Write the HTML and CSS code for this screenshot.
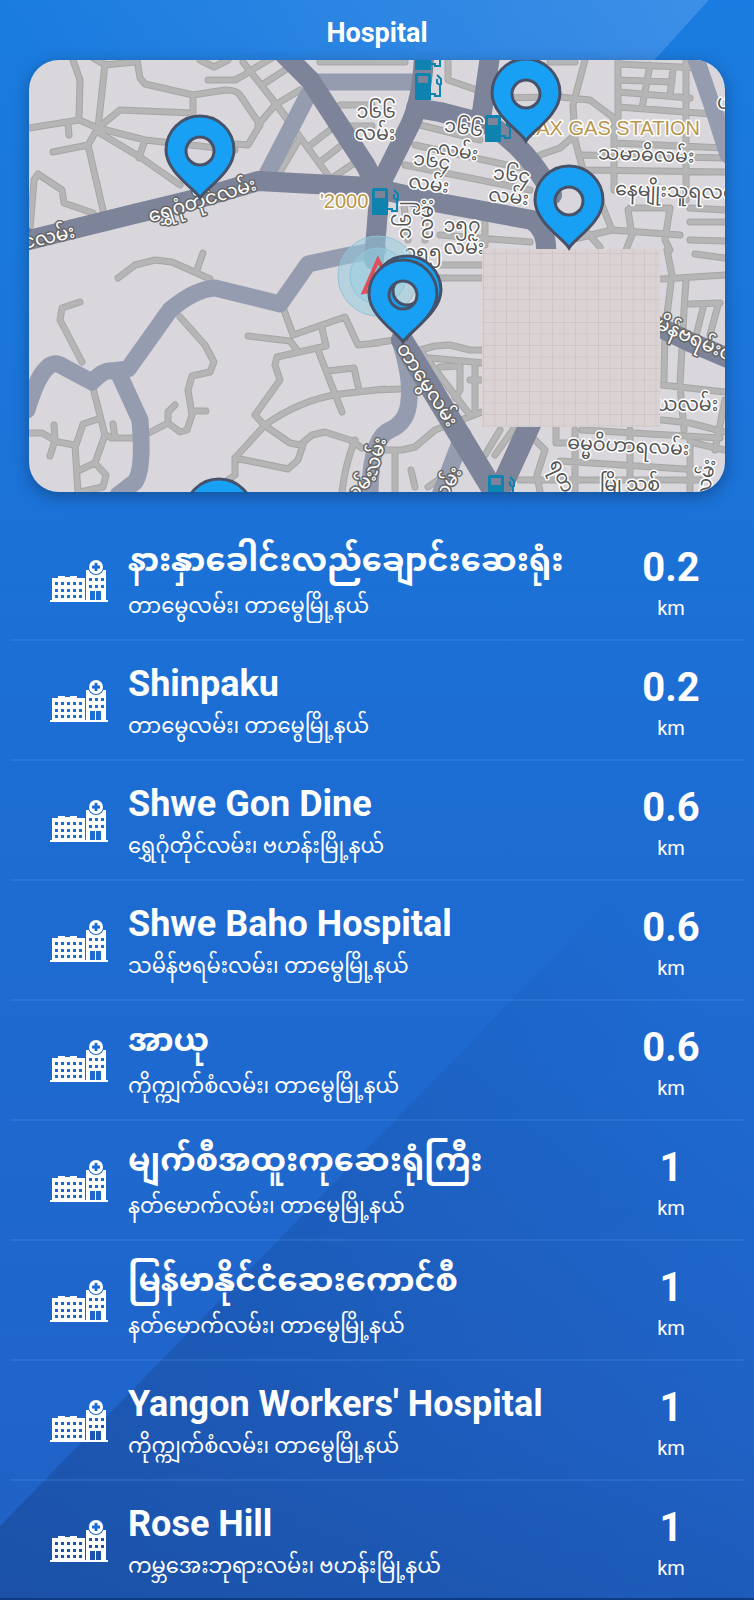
FILE: index.html
```html
<!DOCTYPE html>
<html lang="my">
<head>
  <meta charset="UTF-8"/>
  <meta name="viewport" content="width=device-width, initial-scale=1.0"/>
  <title>Hospital</title>
  <link rel="stylesheet" href="styles.css">
</head>
<body>

  <!-- Shared icons -->
  <svg class="defs" width="0" height="0" aria-hidden="true">
    <symbol id="hospital" viewBox="0 0 60 44">
      <path fill="currentColor" fill-rule="evenodd" d="M3 18h6v-2h7v1h5v-1h7v2h8v22H3zM6 22v3h3v-3zM12 22v3h3v-3zM18 22v3h3v-3zM24 22v3h3v-3zM30 22v3h3v-3zM6 29v3h3v-3zM12 29v3h3v-3zM18 29v3h3v-3zM24 29v3h3v-3zM30 29v3h3v-3zM6 35v3h3v-3zM12 35v3h3v-3zM18 35v3h3v-3zM24 35v3h3v-3zM30 35v3h3v-3z"/>
      <path fill="currentColor" fill-rule="evenodd" d="M37 10h20v30H37zM40 18v3h3v-3zM46 18v3h3v-3zM52 18v3h3v-3zM40 25v3h3v-3zM46 25v3h3v-3zM52 25v3h3v-3zM41 31v9h5v-9zM47 31v9h5v-9z"/>
      <path fill="currentColor" d="M1 40h58v2H1z"/>
      <circle class="icon-gap" cx="47" cy="7" r="8"/>
      <circle fill="currentColor" cx="47" cy="7" r="7"/>
      <path class="icon-plus" d="M47 3v8M43 7h8"/>
    </symbol>
    <symbol id="pin" viewBox="-37 -84 74 86" overflow="visible">
      <path fill-rule="evenodd" d="M0 0C-5 -9 -34 -26 -34 -48A34 34 0 0 1 34 -48C34 -26 5 -9 0 0ZM0 -61A14 14 0 1 0 0 -33A14 14 0 1 0 0 -61Z"/>
    </symbol>
    <symbol id="pump" viewBox="0 0 28 28">
      <path fill-rule="evenodd" d="M1 3Q1 1 3 1H15Q17 1 17 3V28H1ZM4 4V11H14V4Z"/>
      <path class="hose" d="M17 22h4v2h5V13l-3-2V7m0-4l4 4v6"/>
    </symbol>
  </svg>

  <div class="page">
    <header>
      <h1>Hospital</h1>
    </header>

    <main>
      <!-- Map -->
      <div class="map">
        <svg viewBox="29 60 696 432" preserveAspectRatio="xMidYMid slice" role="img" aria-label="Map">
          <defs>
            <path id="streets" d="M73 60L80 80L79 120M29 128L79 120L98 128L145 140L235 150M105 64L98 128L88 145L103 210M68 123L69 135M53 152L88 145M98 132L140 157L180 185M145 140L139 158M98 128L120 110L193 113V95M137 60L140 78L145 84L193 95L225 90Q237 90 240 95L260 125L248 145L235 144M90 56L105 65L135 62M200 60L214 67L228 60M208 80H235Q245 75 255 68L275 56M243 62L287 118M300 90L275 105L258 125M262 85L285 70M275 103L330 178M300 138L277 177M308 147L330 130M320 162L342 145M335 176L356 162
            M29 240L34 180L38 174L62 190L64 203L93 213M340 105H372M350 126H372M320 62H405
            M118 278L135 265L155 260L172 262L190 270L210 279M203 253L197 270M80 302L62 308L60 320L82 362M180 317L205 345L214 362L210 372L192 376L188 390L192 415L187 430L180 432L168 423L145 435M168 423V412L175 405M192 411H206M93 388L105 435L95 463L80 470M105 435L112 438H135M113 424L115 438M29 433L42 433L58 442L75 445L78 492M54 425L55 440L50 456M98 419L83 424L76 445M95 463L106 475L103 487L80 492
            M248 336L290 341L297 350M284 310L293 335L345 317L358 345L378 343M322 328L326 346L277 357L275 365L280 380L255 415L264 425M318 350L342 412M328 371L354 368L359 390M385 389L340 394Q300 400 265 425L235 458L235 475L225 482M264 425L290 443L300 445L312 435L325 432L350 440L362 448M303 445L298 460L288 469L235 458M355 440Q345 465 342 492
            M374 343L395 340M374 390L400 389M395 450V492M374 450L402 450L415 447L435 430L482 412M420 350L435 346L450 345L470 350H484M420 350L470 415M430 358L484 363M440 367L460 366V390L455 398M470 380H484M475 365V412M411 470L415 487M440 265H484M440 278H484M500 430L485 455M515 427L495 455M428 487L445 475
            M520 425L545 450L537 475L540 492M556 428V443H580M582 430L720 438M575 430V492M560 461L700 470M630 430V492M690 440V492M690 442L725 450M520 480H700
            M667 250L672 275L665 330L664 380M662 279L725 275M686 280L684 310L680 385L684 430M690 304L720 303M703 308L695 340M718 305L710 335M662 385L725 392M662 420L690 423L725 432M695 254L725 258M725 400L715 450
            M448 60V80L500 98L560 97L590 100L614 118V190M585 60L573 105L575 140L583 170L725 172M618 60V130M650 65L642 108M673 70L670 95M618 64L700 68M618 80L672 82M618 92L690 98M618 107L725 115M686 60V200M550 62H575M540 155L560 148L575 135M583 155L725 158M614 143L725 148M420 125L480 140M415 145L530 170M405 165L530 190
            M600 200L612 230L680 235M628 210L632 235L626 250M630 208H670L665 240L670 250M570 240L612 230M690 208L725 210M690 222H725M690 240L725 241M600 247L585 230M440 235L530 242M404 205L408 240M425 210V240M485 220V245"/>
            <pattern id="grid" width="23" height="23" patternUnits="userSpaceOnUse">
              <rect width="23" height="23" fill="#dbd2d4"/>
              <path d="M0 12H23M12 0V23" stroke="#d2c8cb"/>
              <path d="M0 0H23M0 0V23" stroke="#c5babd"/>
            </pattern>
          </defs>

          <rect class="land" x="29" y="60" width="696" height="432"/>
          <use href="#streets" class="street-edge"/>
          <use href="#streets" class="street"/>

          <!-- Secondary roads -->
          <g class="road light">
            <path d="M310 82H415"/>
            <path d="M308 95L265 178"/>
            <path d="M695 56L712 105L728 155"/>
            <path d="M27 410Q36 380 45 370Q53 360 62 366L92 382Q104 369 112 371L128 369L170 310Q195 289 215 288L280 304L308 264L345 256L378 250"/>
            <path d="M118 372L140 420Q144 470 135 482L118 495"/>
            <path d="M400 340Q412 380 409 400Q408 422 390 430Q370 438 370 495"/>
            <path d="M463 435L440 495"/>
          </g>
          <!-- Main roads -->
          <g class="road">
            <path d="M490 56L482 112"/>
            <path d="M25 241L130 215L200 198L258 181L370 187L440 203L532 220Q548 230 546 255"/>
            <path d="M284 54L310 80L366 166L378 190"/>
            <path d="M424 56Q422 100 410 125L380 185L374 260"/>
            <path d="M416 108L440 112L490 125Q530 150 552 195"/>
            <path class="wide" d="M402 340L490 485"/>
            <path class="wide" d="M532 420L500 490"/>
            <path d="M655 325L690 342L728 358"/>
          </g>

          <!-- Street names -->
          <g class="name">
            <text x="376" y="118">၁၆၆</text>
            <text x="375" y="140">လမ်း</text>
            <text transform="translate(463 134) rotate(8)">၁၆၆</text>
            <text transform="translate(457 157) rotate(10)">လမ်း</text>
            <text transform="translate(431 167) rotate(8)">၁၆၄</text>
            <text transform="translate(428 190) rotate(8)">လမ်း</text>
            <text transform="translate(511 181) rotate(6)">၁၆၄</text>
            <text transform="translate(508 203) rotate(6)">လမ်း</text>
            <text x="462" y="232">၁၅၇</text>
            <text x="464" y="254">လမ်း</text>
            <text x="423" y="259">၁၅၅</text>
            <text transform="translate(411 220) rotate(-90)">၁၆၂</text>
            <text transform="translate(433 219) rotate(-90)">လမ်း</text>
            <text transform="translate(646 161) rotate(2)">သမာဓိလမ်း</text>
            <text class="start" transform="translate(615 195) rotate(2)">နေမျိုးသူရလမ်း</text>
            <text class="start" x="717" y="109">ပ</text>
            <text class="start" x="656" y="411">ယလမ်း</text>
            <text transform="translate(628 452) rotate(3)">ဓမ္မဝိဟာရလမ်း</text>
            <text x="630" y="491">မြို့သစ်</text>
            <text class="start" transform="translate(549 463) rotate(65)">ရတနာ</text>
            <text transform="translate(712 480) rotate(-80)">လမ်း</text>
          </g>
          <g class="name on-road">
            <text transform="translate(204 206) rotate(-17)">ရွှေဂုံတိုင်လမ်း</text>
            <text transform="translate(50 243) rotate(-13)">င်လမ်း</text>
            <text transform="translate(422 388) rotate(57)">တာမွေလမ်း</text>
            <text class="start" transform="translate(655 328) rotate(24)">မိန်ဗရမ်းလမ်း</text>
            <text transform="translate(381 459) rotate(-75)">လမ်း</text>
            <text transform="translate(363 492) rotate(-45)">လမ်း</text>
            <text transform="translate(452 489) rotate(-60)">လမ်း</text>
          </g>

          <rect x="482" y="249" width="178" height="178" fill="url(#grid)"/>

          <!-- Gas stations -->
          <g class="place">
            <text x="320" y="208">'2000</text>
            <text x="700" y="135" text-anchor="end">MAX GAS STATION</text>
          </g>
          <g class="pump">
            <use href="#pump" x="414" y="42" width="28" height="28"/>
            <use href="#pump" x="414" y="72" width="28" height="28"/>
            <use href="#pump" x="484" y="114" width="28" height="28"/>
            <use href="#pump" x="371" y="187" width="28" height="28"/>
            <use href="#pump" x="487" y="474" width="28" height="28"/>
          </g>

          <!-- Current location -->
          <g class="location">
            <circle cx="378" cy="276" r="40"/>
            <circle cx="378" cy="276" r="28"/>
            <path d="M378 260L364 292L392 286Z"/>
          </g>

          <!-- Hospital pins -->
          <g class="pin">
            <use href="#pin" x="163" y="114" width="74" height="86"/>
            <use href="#pin" x="489" y="57" width="74" height="86"/>
            <use href="#pin" x="532" y="164" width="74" height="86"/>
            <use href="#pin" x="370" y="254" width="74" height="86"/>
            <use href="#pin" x="366" y="258" width="74" height="86"/>
            <use href="#pin" x="182" y="477" width="74" height="86"/>
          </g>
        </svg>
      </div>

      <!-- Hospital list -->
      <ul class="list">
        <li>
          <svg class="icon" aria-hidden="true"><use href="#hospital"/></svg>
          <div class="info">
            <h2 class="mm">နားနှာခေါင်းလည်ချောင်းဆေးရုံး</h2>
            <p>တာမွေလမ်း၊ တာမွေမြို့နယ်</p>
          </div>
          <div class="distance"><strong>0.2</strong><span>km</span></div>
        </li>
        <li>
          <svg class="icon" aria-hidden="true"><use href="#hospital"/></svg>
          <div class="info">
            <h2>Shinpaku</h2>
            <p>တာမွေလမ်း၊ တာမွေမြို့နယ်</p>
          </div>
          <div class="distance"><strong>0.2</strong><span>km</span></div>
        </li>
        <li>
          <svg class="icon" aria-hidden="true"><use href="#hospital"/></svg>
          <div class="info">
            <h2>Shwe Gon Dine</h2>
            <p>ရွှေဂုံတိုင်လမ်း၊ ဗဟန်းမြို့နယ်</p>
          </div>
          <div class="distance"><strong>0.6</strong><span>km</span></div>
        </li>
        <li>
          <svg class="icon" aria-hidden="true"><use href="#hospital"/></svg>
          <div class="info">
            <h2>Shwe Baho Hospital</h2>
            <p>သမိန်ဗရမ်းလမ်း၊ တာမွေမြို့နယ်</p>
          </div>
          <div class="distance"><strong>0.6</strong><span>km</span></div>
        </li>
        <li>
          <svg class="icon" aria-hidden="true"><use href="#hospital"/></svg>
          <div class="info">
            <h2 class="mm">အာယု</h2>
            <p>ကိုက္ကျက်စံလမ်း၊ တာမွေမြို့နယ်</p>
          </div>
          <div class="distance"><strong>0.6</strong><span>km</span></div>
        </li>
        <li>
          <svg class="icon" aria-hidden="true"><use href="#hospital"/></svg>
          <div class="info">
            <h2 class="mm">မျက်စီအထူးကုဆေးရုံကြီး</h2>
            <p>နတ်မောက်လမ်း၊ တာမွေမြို့နယ်</p>
          </div>
          <div class="distance"><strong>1</strong><span>km</span></div>
        </li>
        <li>
          <svg class="icon" aria-hidden="true"><use href="#hospital"/></svg>
          <div class="info">
            <h2 class="mm">မြန်မာနိုင်ငံဆေးကောင်စီ</h2>
            <p>နတ်မောက်လမ်း၊ တာမွေမြို့နယ်</p>
          </div>
          <div class="distance"><strong>1</strong><span>km</span></div>
        </li>
        <li>
          <svg class="icon" aria-hidden="true"><use href="#hospital"/></svg>
          <div class="info">
            <h2>Yangon Workers' Hospital</h2>
            <p>ကိုက္ကျက်စံလမ်း၊ တာမွေမြို့နယ်</p>
          </div>
          <div class="distance"><strong>1</strong><span>km</span></div>
        </li>
        <li>
          <svg class="icon" aria-hidden="true"><use href="#hospital"/></svg>
          <div class="info">
            <h2>Rose Hill</h2>
            <p>ကမ္ဘအေးဘုရားလမ်း၊ ဗဟန်းမြို့နယ်</p>
          </div>
          <div class="distance"><strong>1</strong><span>km</span></div>
        </li>
      </ul>
    </main>
  </div>

</body>
</html>
```
FILE: styles.css
```css
* {
  box-sizing: border-box;
}

body {
  margin: 0;
  font-family: Roboto, "Noto Sans Myanmar", "Noto Sans", sans-serif;
  color: white;
}

h1, h2, p, ul {
  margin: 0;
  padding: 0;
}

.defs {
  position: absolute;
}

.page {
  position: relative;
  isolation: isolate;
  min-height: 100vh;
  background: linear-gradient(to bottom, #1a7ce0, #1c6ed4 45%, #2064ca 90%, #1f5fc0);
  border-bottom: 2px solid #0d3b86;
}

/* Diagonal shapes behind the content */
.page::before,
.page::after {
  content: "";
  position: absolute;
  inset: 0;
  z-index: -1;
}

.page::before {
  background: linear-gradient(to bottom left, rgba(120,175,240,0.4), rgba(120,175,240,0) 50%);
  clip-path: polygon(0 0, 94% 0, 0 49%);
}

.page::after {
  background: linear-gradient(to top right, rgba(20,55,120,0.35), rgba(20,60,130,0.25) 28%, rgba(20,60,130,0) 65%);
  clip-path: polygon(0 95.5%, 100% 47%, 100% 100%, 0 100%);
}

header {
  height: 60px;
  padding-top: 14px;
  text-align: center;
}

h1 {
  font-size: 27px;
  line-height: 38px;
}

/* Map */
.map {
  margin: 0 29px;
  border-radius: 30px;
  overflow: hidden;
  box-shadow: 0 4px 16px rgba(0,0,0,0.3);
}

.map svg {
  display: block;
  width: 100%;
}

.land {
  fill: #d9d6dc;
}

.street-edge,
.street,
.road {
  fill: none;
  stroke-linejoin: round;
  stroke-linecap: round;
}

.street-edge {
  stroke: #a6a6a6;
  stroke-width: 7px;
}

.street {
  stroke: #b5b5b5;
  stroke-width: 5px;
}

.road {
  stroke: #7d8398;
  stroke-width: 20px;
}

.road.light {
  stroke: #969cb0;
  stroke-width: 17px;
}

.road .wide {
  stroke-width: 22px;
}

.pump {
  fill: #0f83b0;
}

.hose {
  fill: none;
  stroke: #0f83b0;
  stroke-width: 2px;
}

.place text,
.name text {
  paint-order: stroke;
  stroke: white;
  stroke-width: 3px;
  stroke-linejoin: round;
}

.place {
  font-family: "Liberation Sans", sans-serif;
  font-size: 20px;
  fill: #b8964a;
}

.name {
  font-size: 19px;
  text-anchor: middle;
  fill: #555;
}

.name .start {
  text-anchor: start;
}

.name.on-road {
  fill: white;
}

.name.on-road text {
  stroke: #666;
}

.location circle {
  fill: rgba(150,205,225,0.5);
  stroke: #8fc3d6;
}

.location path {
  fill: none;
  stroke: #e0505a;
  stroke-width: 4px;
}

.pin {
  fill: #18a0f5;
  stroke: #46526a;
  stroke-width: 3px;
}

/* List */
.list {
  list-style: none;
  margin-top: 29px;
  padding: 0 10px;
}

.list li {
  display: grid;
  grid-template-columns: 60px 1fr 90px;
  column-gap: 19px;
  align-items: center;
  min-height: 120px;
  padding: 4px 28px 0 39px;
  border-bottom: 2px solid rgba(90,160,240,0.2);
}

.list li:last-child {
  min-height: 117px;
  border-bottom: none;
}

.icon {
  width: 60px;
  height: 44px;
}

.icon-gap {
  fill: #1c6bd0;
}

.icon-plus {
  fill: none;
  stroke: #1c6bd0;
  stroke-width: 3px;
}

h2 {
  font-size: 36px;
  line-height: 48px;
  white-space: nowrap;
}

h2.mm {
  font-size: 32px;
  line-height: 40px;
  padding-bottom: 8px;
}

.info p {
  font-size: 21px;
  line-height: 36px;
  white-space: nowrap;
}

.distance {
  display: flex;
  flex-direction: column;
  padding-top: 8px;
  text-align: center;
}

.distance strong {
  font-size: 40px;
  line-height: 44px;
}

.distance span {
  font-size: 20px;
  line-height: 36px;
}
```
